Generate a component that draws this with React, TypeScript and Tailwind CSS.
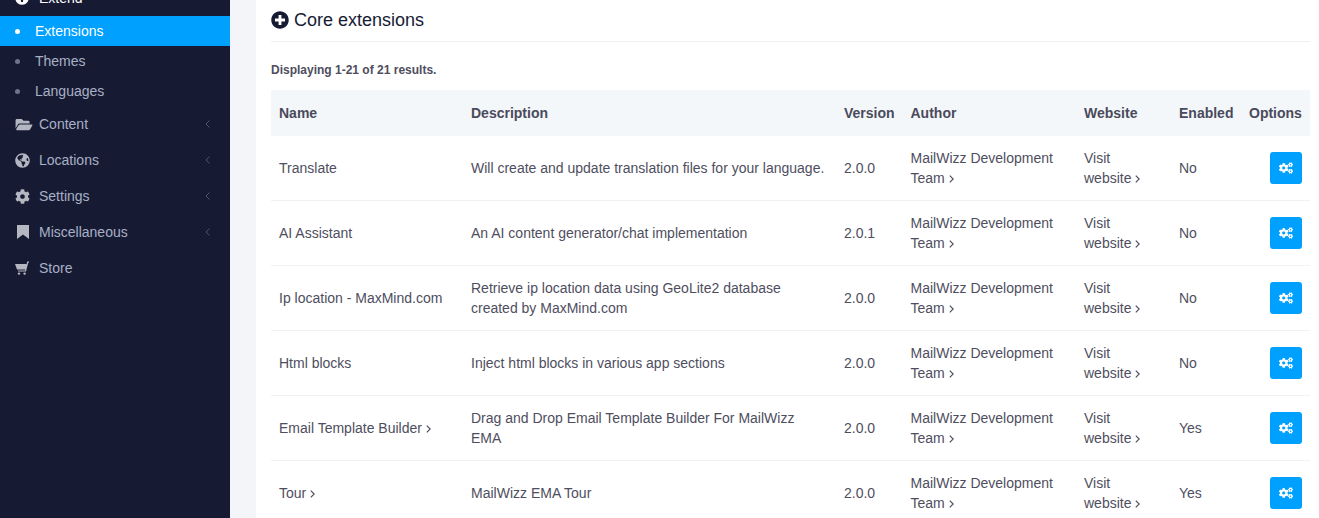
import { FaCog, FaCogs, FaFolderOpen, FaGlobeAmericas, FaPlusCircle } from 'react-icons/fa';
import type { ReactNode } from 'react';

const BookmarkIcon = () => (
  <svg viewBox="0 0 12 14" className="w-[12px] h-[14px] ml-[2px]" fill="currentColor">
    <path d="M0 0H12V14L6 9.5L0 14Z" />
  </svg>
);

const CartIcon = () => (
  <svg viewBox="0 0 14 14" className="w-[14px] h-[14px]" fill="currentColor">
    <path d="M0 3H11.6L12.3 0.5H14V1.8H13.2L11 10.5H3V9.4H10L10.2 8.6H2Z" />
    <circle cx="4" cy="12.6" r="1.2" />
    <circle cx="9.6" cy="12.6" r="1.2" />
  </svg>
);

const menu = [
  { label: 'Content', icon: <FaFolderOpen className="w-[18px] h-[15px]" />, arrow: true },
  { label: 'Locations', icon: <FaGlobeAmericas className="w-[15px] h-[15px]" />, arrow: true },
  { label: 'Settings', icon: <FaCog className="w-[15px] h-[15px]" />, arrow: true },
  { label: 'Miscellaneous', icon: <BookmarkIcon />, arrow: true },
  { label: 'Store', icon: <CartIcon />, arrow: false },
];

const subItems = ['Extensions', 'Themes', 'Languages'];

const rows = [
  { name: 'Translate', link: false, description: 'Will create and update translation files for your language.', version: '2.0.0', enabled: 'No' },
  { name: 'AI Assistant', link: false, description: 'An AI content generator/chat implementation', version: '2.0.1', enabled: 'No' },
  { name: 'Ip location - MaxMind.com', link: false, description: 'Retrieve ip location data using GeoLite2 database created by MaxMind.com', version: '2.0.0', enabled: 'No' },
  { name: 'Html blocks', link: false, description: 'Inject html blocks in various app sections', version: '2.0.0', enabled: 'No' },
  { name: 'Email Template Builder', link: true, description: 'Drag and Drop Email Template Builder For MailWizz EMA', version: '2.0.0', enabled: 'Yes' },
  { name: 'Tour', link: true, description: 'MailWizz EMA Tour', version: '2.0.0', enabled: 'Yes' },
];

const Th = ({ children, className }: { children: ReactNode; className: string }) => (
  <th className={`px-2 py-[13px] text-left font-bold text-[#4a4a5c] ${className}`}>{children}</th>
);

const Td = ({ children }: { children: ReactNode }) => (
  <td className="px-2 border-b border-[#f0f2f4]">{children}</td>
);

const Arrow = () => (
  <svg viewBox="0 0 5 8" className="inline-block w-[5px] h-[8px] align-[0.5px]" fill="none" stroke="#4e4e5e" strokeWidth="1.2">
    <path d="M0.8 0.6L4.2 4L0.8 7.4" />
  </svg>
);

const Sidebar = () => (
  <aside className="w-[230px] shrink-0 bg-[#161b33] -mt-[20px] h-[538px]">
    <div className="flex items-center h-[36px] pl-[15px] text-white">
      <FaPlusCircle className="w-[14px] h-[14px] mr-[10px]" />
      <span>Extend</span>
    </div>
    {subItems.map((item, i) => (
      <div
        key={item}
        className={`flex items-center h-[30px] pl-[15px] ${i === 0 ? 'bg-[#00a0ff] text-white' : 'text-[#a9b0c6]'}`}
      >
        <span className={`w-[5px] h-[5px] rounded-full mr-[15px] ${i === 0 ? 'bg-white' : 'bg-[#6f748a]'}`}></span>
        <span>{item}</span>
      </div>
    ))}
    {menu.map((item) => (
      <div key={item.label} className="flex items-center h-[36px] pl-[15px] pr-[20px] text-[#a9b0c6]">
        <span className="w-[24px] flex items-center text-[#b4b7c2]">{item.icon}</span>
        <span className="flex-1">{item.label}</span>
        {item.arrow && (
          <svg viewBox="0 0 5 8" className="w-[5px] h-[8px]" fill="none" stroke="#4d5375" strokeWidth="1">
            <path d="M4.5 0.5L1 4L4.5 7.5" />
          </svg>
        )}
      </div>
    ))}
  </aside>
);

const App = () => {
  return (
    <div className="flex w-[1319px] h-[518px] overflow-hidden bg-[#f3f5f8] text-[14px] leading-[20px] text-[#4e4e5e] font-['Liberation_Sans',Arial,sans-serif]">
      <Sidebar />
      <main className="flex-1 ml-[26px] bg-white pl-[15px] pr-[9px]">
        <h3 className="flex items-center h-[42px] pb-[2px] border-b border-[#eef0f3] text-[18px] text-[#161b33]">
          <FaPlusCircle className="w-[18px] h-[18px] mr-[5px]" />
          <span>Core extensions</span>
        </h3>
        <p className="mt-[18px] h-[30px] text-[12px] font-bold">Displaying 1-21 of 21 results.</p>
        <table className="w-full table-fixed border-separate border-spacing-0">
          <thead>
            <tr className="bg-[#f4f7fa] h-[46px]">
              <Th className="w-[192px]">Name</Th>
              <Th className="w-[373px]">Description</Th>
              <Th className="w-[66.5px]">Version</Th>
              <Th className="w-[173.5px]">Author</Th>
              <Th className="w-[95px]">Website</Th>
              <Th className="w-[70px]">Enabled</Th>
              <Th className="w-[69px]">Options</Th>
            </tr>
          </thead>
          <tbody>
            {rows.map((row) => (
              <tr key={row.name} className="h-[65px]">
                <Td>
                  {row.name} {row.link && <Arrow />}
                </Td>
                <Td>{row.description}</Td>
                <Td>{row.version}</Td>
                <Td>
                  MailWizz Development <span className="whitespace-nowrap">Team <Arrow /></span>
                </Td>
                <Td>
                  Visit <span className="block whitespace-nowrap">website <Arrow /></span>
                </Td>
                <Td>{row.enabled}</Td>
                <Td>
                  <button className="flex items-center justify-center w-[32px] h-[32px] ml-auto rounded-[3px] bg-[#00a0ff] text-white">
                    <FaCogs className="w-[14px] h-[14px]" />
                  </button>
                </Td>
              </tr>
            ))}
          </tbody>
        </table>
      </main>
    </div>
  );
};

export default App;
